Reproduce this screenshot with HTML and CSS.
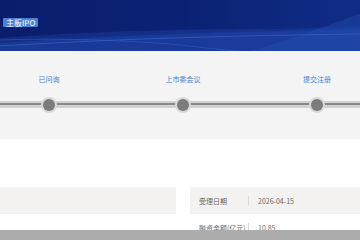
FILE: index.html
```html
<!DOCTYPE html>
<html lang="zh-CN">
    <head>
        <meta charset="utf-8" />
        <meta name="viewport" content="width=device-width, initial-scale=1" />
        <title>主板IPO</title>
        <link rel="stylesheet" href="styles.css">
    </head>

    <body>
        <div class="banner">
            <svg class="waves" viewBox="0 0 360 51" preserveAspectRatio="none">
                <path d="M0 38 C80 32 180 29 260 29 C300 29 340 27 360 26 L360 51 L0 51 Z" fill="#1b3c9c" opacity="0.5" />
                <path d="M0 43 C90 37 190 33 270 31 C310 30 340 30 360 29 L360 51 L0 51 Z" fill="#2249ad" opacity="0.45" />
                <path d="M250 51 C290 40 330 24 360 14 L360 51 Z" fill="#2853b8" opacity="0.35" />
                <path d="M0 46 C100 40 200 36 360 34" stroke="#4a78d8" stroke-width="1" fill="none" opacity="0.45" />
                <path d="M0 40 C60 38 120 40 170 44 C200 47 220 50 240 51" stroke="#3a66c8" stroke-width="1" fill="none" opacity="0.45" />
            </svg>
            <span class="badge">主板IPO</span>
        </div>

        <div class="progress">
            <div class="steps">
                <div class="step">
                    <div class="label">已问询</div>
                    <div class="dot"></div>
                </div>
                <div class="step">
                    <div class="label">上市委会议</div>
                    <div class="dot"></div>
                </div>
                <div class="step">
                    <div class="label">提交注册</div>
                    <div class="dot"></div>
                </div>
            </div>
        </div>

        <div class="info">
            <table class="info-table left">
                <tr class="shade"><td></td></tr>
                <tr><td></td></tr>
            </table>
            <table class="info-table right">
                <tr class="shade">
                    <td class="key">受理日期</td>
                    <td class="val">2026-04-15</td>
                </tr>
                <tr>
                    <td class="key">融资金额(亿元)</td>
                    <td class="val">10.85</td>
                </tr>
            </table>
        </div>

        <div class="bottom-bar"></div>
    </body>
</html>
```

FILE: styles.css
```css
body {
    margin: 0;
    background: #fff;
    font-family: "Noto Sans CJK SC", "Liberation Sans", sans-serif;
    overflow: hidden;
}

.banner {
    position: relative;
    height: 51px;
    background: linear-gradient(90deg, #0a1d6c 0%, #0b2274 50%, #102c86 100%);
    overflow: hidden;
}

.waves {
    position: absolute;
    left: 0;
    top: 0;
    width: 100%;
    height: 100%;
}

.badge {
    position: absolute;
    left: 3px;
    top: 18px;
    height: 9px;
    padding: 0 3px;
    background: #4b82d4;
    color: #fff;
    font-size: 8px;
    line-height: 9px;
    border-radius: 1px;
}

.progress {
    height: 88px;
    background: #f4f4f4;
    overflow: hidden;
}

.steps {
    display: flex;
    margin-left: -18px;
    padding-top: 23px;
    width: 500px;
    height: 65px;
    background: linear-gradient(#f4f4f4 0, #f4f4f4 50px, #d2d2d2 50px, #d2d2d2 52px, #8a8a8a 52px, #8a8a8a 54px, #d2d2d2 54px, #d2d2d2 57px, #f4f4f4 57px);
}

.step {
    width: 134px;
    display: flex;
    flex-direction: column;
    align-items: center;
}

.label {
    font-size: 7px;
    line-height: 10px;
    color: #4a80d0;
}

.dot {
    width: 12px;
    height: 12px;
    margin-top: 15px;
    border-radius: 50%;
    background: #7c7c7c;
    box-shadow: 0 0 0 2px #d9d9d9;
}

.info {
    display: flex;
    gap: 14px;
    margin-top: 48px;
}

.info-table {
    border-collapse: collapse;
    font-size: 7px;
    color: #666;
}

.info-table.left {
    width: 176px;
}

.info-table.right {
    flex: 1;
}

.info-table td {
    height: 27px;
    padding: 0;
    white-space: nowrap;
}

.info-table tr.shade td {
    background: #f3f2f0;
}

.info-table td.key {
    width: 50px;
    padding-left: 9px;
    position: relative;
}

.info-table td.key::after {
    content: "";
    position: absolute;
    right: 0;
    top: 9px;
    height: 10px;
    border-left: 1px solid #dcdcdc;
}

.info-table td.val {
    padding-left: 9px;
}

.bottom-bar {
    position: fixed;
    left: 0;
    right: 0;
    bottom: 0;
    height: 10px;
    background: #acacac;
}
```
